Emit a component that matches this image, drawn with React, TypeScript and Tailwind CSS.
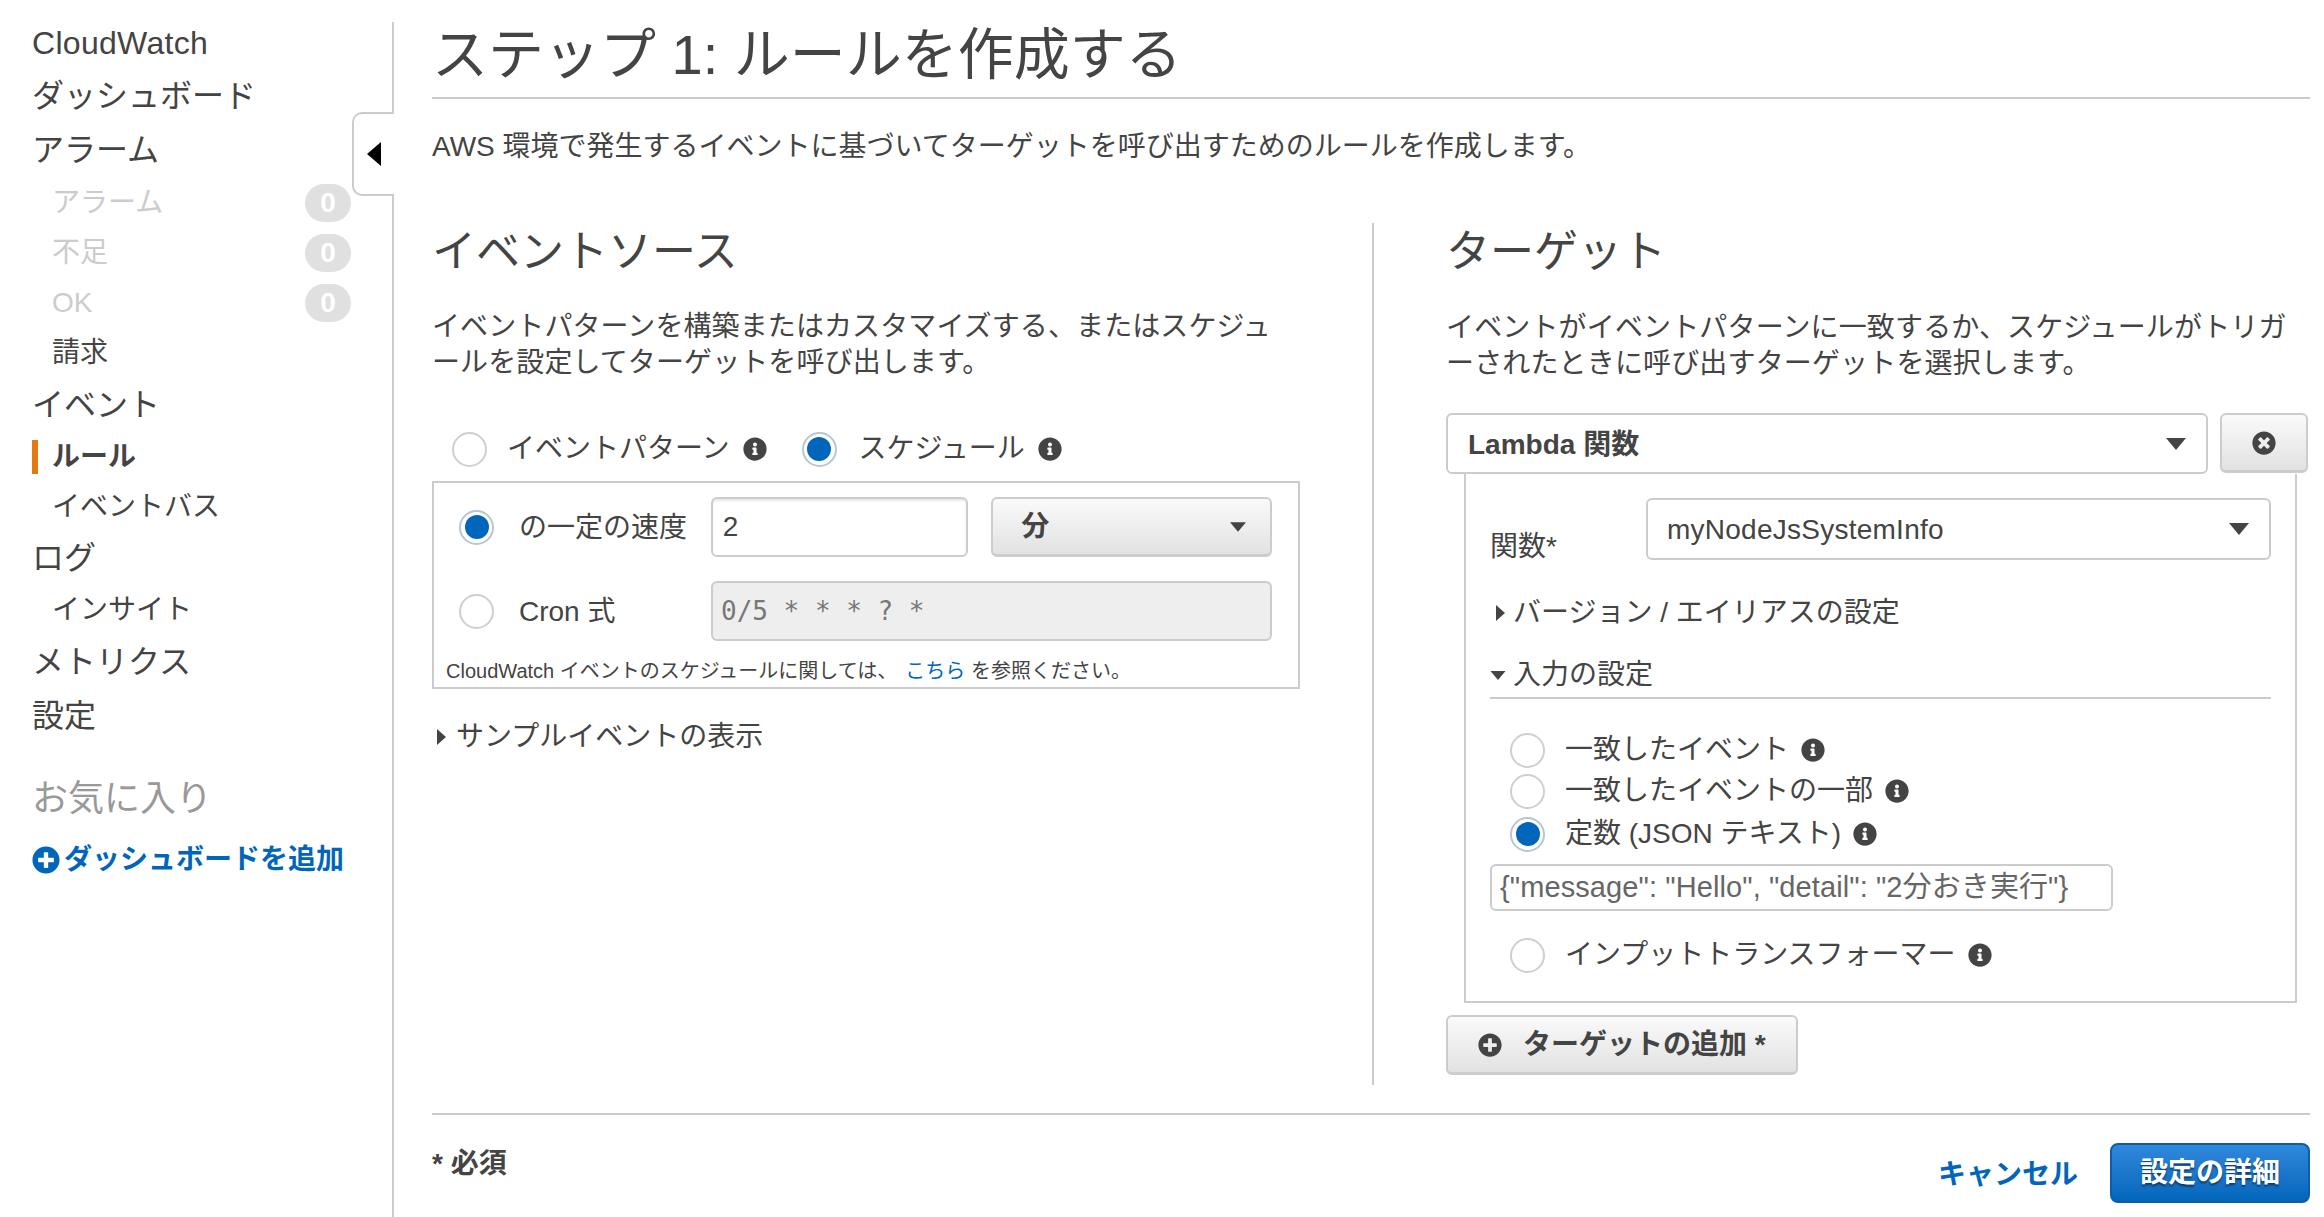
import React from "react";
import { FaInfoCircle, FaPlusCircle, FaTimesCircle } from "react-icons/fa";

const font = "font-['Liberation_Sans','Noto_Sans_CJK_JP',sans-serif]";

function Radio({ checked = false }: { checked?: boolean }) {
  return (
    <span
      className={`flex h-[35px] w-[35px] shrink-0 items-center justify-center rounded-full border-2 bg-white ${
        checked ? "border-[#b5c6d6]" : "border-[#cfcfcf]"
      }`}
    >
      {checked && <span className="h-[24px] w-[24px] rounded-full bg-[#0066bb]" />}
    </span>
  );
}

function Info() {
  return <FaInfoCircle className="h-[24px] w-[24px] shrink-0 text-[#444]" />;
}

function Caret({ className = "" }: { className?: string }) {
  return (
    <svg viewBox="0 0 20 12" className={`h-[12px] w-[20px] shrink-0 ${className}`}>
      <path d="M0 0h20L10 12z" fill="#444" />
    </svg>
  );
}

function ArrowRight() {
  return (
    <svg viewBox="0 0 9 16" className="h-[16px] w-[9px] shrink-0">
      <path d="M0 0l9 8-9 8z" fill="#444" />
    </svg>
  );
}

function NavRow({
  label,
  sub,
  muted,
  badge,
  active,
  className = "",
}: {
  label: string;
  sub?: boolean;
  muted?: boolean;
  badge?: boolean;
  active?: boolean;
  className?: string;
}) {
  return (
    <div
      className={`flex items-center ${className} ${
        sub ? "text-[28px]" : "text-[32px]"
      } ${muted ? "text-[#ccc]" : "text-[#444]"}`}
    >
      {active ? (
        <span className="mr-[14px] h-[34px] w-[6px] bg-[#e47911]" />
      ) : (
        <span className={sub ? "w-[20px]" : ""} />
      )}
      <span className={active ? "font-bold" : ""}>{label}</span>
      {badge && (
        <span className="ml-auto flex h-[38px] w-[46px] items-center justify-center rounded-[19px] bg-[#e0e0e0] text-[28px] font-bold text-white">
          0
        </span>
      )}
    </div>
  );
}

function Sidebar() {
  return (
    <aside className="relative mt-[22px] w-[394px] shrink-0 border-r-2 border-[#ccc] pl-[32px] pr-[41px]">
      <div className="flex flex-col">
        <NavRow label="CloudWatch" className="h-[42px] tracking-[0.3px]" />
        <NavRow label="ダッシュボード" className="mt-[11px] h-[42px]" />
        <NavRow label="アラーム" className="mt-[12px] h-[42px]" />
        <NavRow label="アラーム" sub muted badge className="mt-[7px] h-[50px] -mb-[1px]" />
        <NavRow label="不足" sub muted badge className="mt-[1px] h-[50px]" />
        <NavRow label="OK" sub muted badge className="h-[50px]" />
        <NavRow label="請求" sub className="h-[50px]" />
        <NavRow label="イベント" className="h-[54px]" />
        <NavRow label="ルール" sub active className="h-[50px]" />
        <NavRow label="イベントバス" sub className="h-[50px]" />
        <NavRow label="ログ" className="h-[52px]" />
        <NavRow label="インサイト" sub className="h-[52px]" />
        <NavRow label="メトリクス" className="h-[52px]" />
        <NavRow label="設定" className="h-[55px]" />
      </div>
      <div className="mt-[31px] flex h-[50px] items-center text-[36px] text-[#999]">お気に入り</div>
      <div className="mt-[18px] flex h-[36px] items-center text-[28px] font-bold text-[#0066bb]">
        <FaPlusCircle className="mr-[4px] h-[28px] w-[28px]" />
        ダッシュボードを追加
      </div>
      {/* collapse tab sits over the sidebar border */}
      <div className="absolute -right-[2px] top-[90px] flex h-[84px] w-[42px] items-center justify-start rounded-l-[10px] border-2 border-r-0 border-[#ccc] bg-white pl-[13px]">
        <svg viewBox="0 0 14 24" className="h-[24px] w-[14px]">
          <path d="M14 0v24L0 12z" fill="#000" />
        </svg>
      </div>
    </aside>
  );
}

function EventSource() {
  return (
    <section className="w-[868px] shrink-0">
      <h2 className="mt-[3px] h-[52px] text-[44px] leading-[52px] font-normal">イベントソース</h2>
      <p className="mt-[31px] text-[28px] leading-[36px] tracking-[0.1px]">
        イベントパターンを構築またはカスタマイズする、またはスケジュ
        <br />
        ールを設定してターゲットを呼び出します。
      </p>
      <div className="mt-[50px] flex h-[36px] items-center pl-[20px] text-[28px]">
        <Radio />
        <span className="ml-[20px]">イベントパターン</span>
        <span className="ml-[13px]">
          <Info />
        </span>
        <span className="ml-[35px]">
          <Radio checked />
        </span>
        <span className="ml-[22px]">スケジュール</span>
        <span className="ml-[13px]">
          <Info />
        </span>
      </div>
      <div className="mt-[14px] h-[208px] border-2 border-[#ccc] pl-[25px] pr-[26px] pt-[14px]">
        <div className="flex h-[60px] items-center">
          <Radio checked />
          <span className="ml-[25px] mt-[2px] w-[192px] text-[28px]">の一定の速度</span>
          <div className="flex h-[60px] w-[258px] items-center rounded-[6px] border-2 border-[#ccc] bg-white pl-[10px] shadow-[inset_0_2px_2px_#e8e8e8]">
            2
          </div>
          <div className="ml-[23px] flex h-[60px] w-[281px] items-center rounded-[6px] border-2 border-b-[3px] border-[#ccc] bg-linear-to-b from-[#fafafa] to-[#e2e2e2] pl-[28px] pr-[24px] font-bold">
            分
            <Caret className="ml-auto !h-[10px] !w-[16px]" />
          </div>
        </div>
        <div className="mt-[24px] flex h-[60px] items-center">
          <Radio />
          <span className="ml-[25px] mt-[2px] w-[192px] text-[28px]">Cron 式</span>
          <div className="flex h-[60px] flex-1 items-center rounded-[6px] border-2 border-[#ccc] bg-[#eee] pl-[8px] font-['DejaVu_Sans_Mono',monospace] text-[26px] text-[#777]">
            0/5 * * * ? *
          </div>
        </div>
        <p className="-ml-[13px] mt-[16px] text-[20px] leading-[28px] whitespace-nowrap">
          CloudWatch イベントのスケジュールに関しては、
          <span className="ml-[8px] text-[#0066bb]">こちら</span> を参照ください。
        </p>
      </div>
      <div className="mt-[30px] flex h-[36px] items-center pl-[5px] text-[28px]">
        <ArrowRight />
        <span className="ml-[10px]">サンプルイベントの表示</span>
      </div>
    </section>
  );
}

function InputRadio({ label, checked, className = "" }: { label: string; checked?: boolean; className?: string }) {
  return (
    <div className={`flex h-[36px] items-center pl-[20px] text-[28px] ${className}`}>
      <Radio checked={checked} />
      <span className="ml-[20px]">{label}</span>
      <span className="ml-[12px]">
        <Info />
      </span>
    </div>
  );
}

function Target() {
  return (
    <section className="w-[864px] shrink-0">
      <h2 className="mt-[3px] h-[52px] text-[44px] leading-[52px] font-normal">ターゲット</h2>
      <p className="mt-[32px] text-[28px] leading-[36px] tracking-[0.15px]">
        イベントがイベントパターンに一致するか、スケジュールがトリガ
        <br />
        ーされたときに呼び出すターゲットを選択します。
      </p>
      <div className="mt-[31px] flex gap-[12px]">
        <div className="flex h-[61px] w-[762px] items-center rounded-[6px] border-2 border-[#ccc] bg-white pl-[20px] pr-[20px] font-bold">
          <span className="mt-[2px]">Lambda 関数</span>
          <Caret className="ml-auto" />
        </div>
        <div className="flex h-[60px] w-[88px] items-center justify-center rounded-[6px] border-2 border-b-[3px] border-[#ccc] bg-linear-to-b from-[#fafafa] to-[#e2e2e2]">
          <FaTimesCircle className="h-[24px] w-[24px] text-[#444]" />
        </div>
      </div>
      <div className="ml-[18px] w-[833px] border-2 border-t-0 border-[#ccc] pb-[28px] pl-[24px] pr-[24px] pt-[24px]">
        <div className="flex">
          <span className="mt-[31px] w-[156px] text-[28px] leading-[36px]">関数*</span>
          <div className="flex h-[62px] flex-1 items-center rounded-[6px] border-2 border-[#ccc] bg-white pl-[19px] pr-[20px]">
            <span className="mt-[2px] tracking-[0.25px]">myNodeJsSystemInfo</span>
            <Caret className="ml-auto" />
          </div>
        </div>
        <div className="mt-[30px] flex h-[36px] items-center pl-[6px]">
          <ArrowRight />
          <span className="ml-[8px]">バージョン / エイリアスの設定</span>
        </div>
        <div className="mt-[26px] flex h-[36px] items-center border-[#ccc]">
          <Caret className="!h-[9px] !w-[16px]" />
          <span className="ml-[7px]">入力の設定</span>
        </div>
        <div className="mt-[4px] border-t-2 border-[#ccc]" />
        <InputRadio label="一致したイベント" className="mt-[33px]" />
        <InputRadio label="一致したイベントの一部" className="mt-[5px]" />
        <InputRadio label="定数 (JSON テキスト)" checked className="mt-[7px]" />
        <div className="mt-[12px] flex h-[47px] w-[623px] items-center rounded-[6px] border-2 border-[#ccc] bg-white pl-[8px] text-[29px] tracking-[0.1px] text-[#666] whitespace-nowrap">
          {'{"message": "Hello", "detail": "2分おき実行"}'}
        </div>
        <InputRadio label="インプットトランスフォーマー" className="mt-[26px]" />
      </div>
      <div className="mt-[12px] flex h-[60px] w-[352px] items-center rounded-[6px] border-2 border-b-[3px] border-[#ccc] bg-linear-to-b from-[#fafafa] to-[#e2e2e2] pl-[30px] text-[28px] font-bold">
        <FaPlusCircle className="h-[24px] w-[24px] text-[#444]" />
        <span className="ml-[21px]">ターゲットの追加 *</span>
      </div>
    </section>
  );
}

export default function App() {
  return (
    <div className={`flex h-screen w-screen overflow-hidden bg-white text-[28px] text-[#444] ${font}`}>
      <Sidebar />
      <main className="flex-1 pl-[38px] pr-[14px]">
        <h1 className="flex h-[99px] items-center border-b-2 border-[#ccc] pt-[13px] text-[56px] font-normal">
          ステップ 1: ルールを作成する
        </h1>
        <p className="mt-[30px] h-[36px] leading-[36px]">
          AWS 環境で発生するイベントに基づいてターゲットを呼び出すためのルールを作成します。
        </p>
        <div className="mt-[58px] flex h-[862px]">
          <EventSource />
          <div className="ml-[72px] mr-[72px] w-[2px] bg-[#ccc]" />
          <Target />
        </div>
        <div className="mt-[28px] flex border-t-2 border-[#ccc]">
          <span className="mt-[31px] text-[28px] leading-[36px] font-bold">* 必須</span>
          <span className="ml-auto mt-[42px] text-[28px] leading-[36px] font-bold text-[#0066bb]">キャンセル</span>
          <div className="ml-[32px] mt-[28px] flex h-[60px] w-[200px] items-center justify-center rounded-[8px] border-2 border-[#0a5fa8] bg-linear-to-b from-[#2f88dc] to-[#0066bb] font-bold text-white [text-shadow:0_2px_2px_#00000080]">
            設定の詳細
          </div>
        </div>
      </main>
    </div>
  );
}
